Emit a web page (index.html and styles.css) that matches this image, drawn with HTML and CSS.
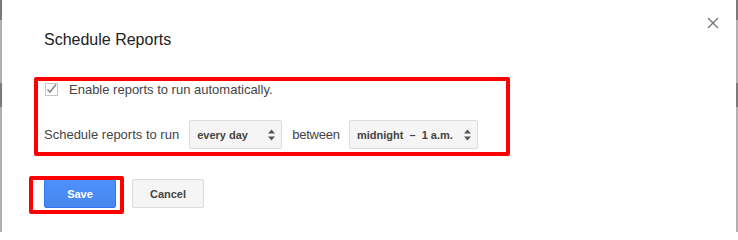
FILE: index.html
```html
<!DOCTYPE html>
<html>
<head>
<meta charset="utf-8">
<link rel="stylesheet" href="styles.css">
</head>
<body>
<div class="page">
  <div class="edge"></div>
  <div class="dialog">
    <div class="header">
      <h1 class="title">Schedule Reports</h1>
      <button class="close" aria-label="Close">
        <svg width="12" height="12" viewBox="0 0 12 12"><path d="M1 1L11 11M11 1L1 11" stroke="#777" stroke-width="1.4" fill="none"/></svg>
      </button>
    </div>
    <div class="check-row">
      <span class="checkbox">
        <svg width="13" height="13" viewBox="0 0 13 13"><rect x="0.5" y="0.5" width="12" height="12" fill="#fff" stroke="#c6c6c6"/><path d="M2.5 6.5L5 9L11 1.5" stroke="#8a8a8a" stroke-width="1.6" fill="none"/></svg>
      </span>
      <span class="label">Enable reports to run automatically.</span>
    </div>
    <div class="schedule-row">
      <span class="label">Schedule reports to run</span>
      <div class="select select-day"><span>every day</span>
        <svg class="arrows" width="7" height="12" viewBox="0 0 7 12"><path d="M3.5 0.5L7 4.5H0Z M3.5 11.5L7 7.5H0Z" fill="#555"/></svg>
      </div>
      <span class="label label-between">between</span>
      <div class="select select-time"><span>midnight &nbsp;–&nbsp; 1 a.m.</span>
        <svg class="arrows" width="7" height="12" viewBox="0 0 7 12"><path d="M3.5 0.5L7 4.5H0Z M3.5 11.5L7 7.5H0Z" fill="#555"/></svg>
      </div>
    </div>
    <div class="buttons">
      <button class="btn btn-save">Save</button>
      <button class="btn btn-cancel">Cancel</button>
    </div>
    <div class="mark mark-settings"></div>
    <div class="mark mark-save"></div>
  </div>
  <div class="edge"></div>
</div>
</body>
</html>
```
FILE: styles.css
```css
html, body {
  margin: 0;
  padding: 0;
  background: #fff;
}
.page {
  display: flex;
  width: 738px;
  height: 232px;
  overflow: hidden;
  font-family: "Liberation Sans", Arial, sans-serif;
}
.edge {
  width: 2px;
  flex: none;
  background: linear-gradient(to bottom, #7a7a7a 0, #7a7a7a 20px, #b0b0b0 20px, #b0b0b0 83px, #7a7a7a 83px, #7a7a7a 107px, #b0b0b0 107px);
}
.dialog {
  flex: 1;
  position: relative;
  background: #fff;
  padding: 0 17px 0 42px;
}
.header {
  display: flex;
  justify-content: space-between;
  align-items: flex-start;
  padding-top: 17px;
}
.title {
  margin: 14px 0 0 0;
  font-size: 16px;
  font-weight: normal;
  line-height: 18px;
  color: #222;
}
.close {
  margin: 0;
  padding: 0;
  border: 0;
  background: none;
  width: 12px;
  height: 12px;
  display: block;
}
.close svg { display: block; }
.check-row {
  display: flex;
  align-items: center;
  margin-top: 33px;
  height: 15px;
  padding-left: 1px;
}
.checkbox {
  width: 13px;
  height: 13px;
  margin-right: 11px;
}
.checkbox svg { display: block; }
.label {
  font-size: 13px;
  line-height: 15px;
  color: #444;
}
.label-between {
  letter-spacing: -0.2px;
}
.schedule-row {
  display: flex;
  align-items: center;
  margin-top: 23px;
  gap: 10px;
}
.select {
  box-sizing: border-box;
  height: 29px;
  display: flex;
  align-items: center;
  justify-content: space-between;
  padding: 0 6px 0 7px;
  background: #f5f5f5;
  border: 1px solid #dcdcdc;
  border-radius: 2px;
  font-size: 11px;
  font-weight: bold;
  color: #444;
}
.select-day { width: 93px; }
.select-time { width: 129px; margin-left: -1px; }
.arrows { display: block; }
.buttons {
  display: flex;
  gap: 16px;
  margin-top: 30px;
}
.btn {
  box-sizing: border-box;
  width: 72px;
  height: 29px;
  margin: 0;
  padding: 0;
  border-radius: 2px;
  font-family: "Liberation Sans", Arial, sans-serif;
  font-size: 11px;
  font-weight: bold;
}
.btn-save {
  background: linear-gradient(to bottom, #4d90fe, #4787ed);
  border: 1px solid #3079ed;
  color: #fff;
}
.btn-cancel {
  background: #f5f5f5;
  border: 1px solid #dcdcdc;
  color: #444;
}
.mark {
  position: absolute;
  box-sizing: border-box;
  border: 4px solid #f00;
  border-radius: 2px;
}
.mark-settings {
  left: 32px;
  top: 77px;
  width: 476px;
  height: 79px;
}
.mark-save {
  left: 27px;
  top: 176px;
  width: 95px;
  height: 38px;
}
```
